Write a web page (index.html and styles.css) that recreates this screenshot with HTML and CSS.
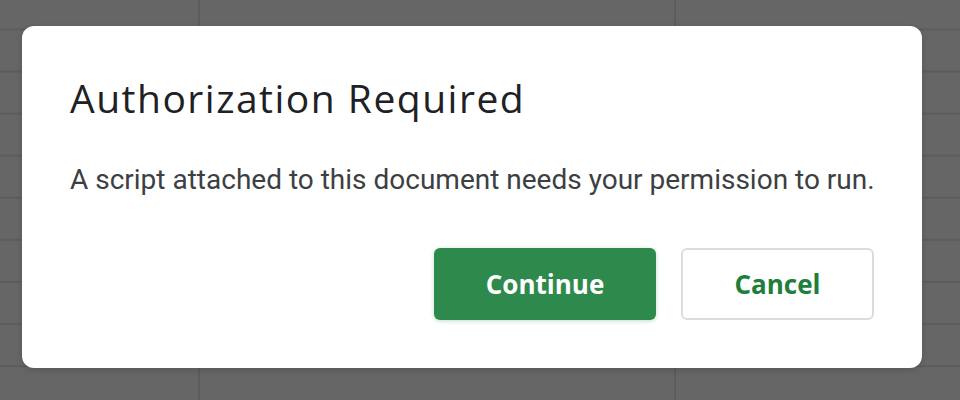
FILE: index.html
```html
<!DOCTYPE html>
<html lang="en">
<head>
  <meta charset="UTF-8" />
  <title>Authorization Required</title>
  <link rel="stylesheet" href="styles.css">
</head>
<body>

  <!-- Таблица на фоне -->
  <div class="sheet"></div>

  <!-- Диалог -->
  <div class="overlay">
    <div class="dialog">
      <h1 class="dialog-title">Authorization Required</h1>
      <p class="dialog-text">A script attached to this document needs your permission to run.</p>
      <div class="dialog-buttons">
        <button class="btn btn-primary">Continue</button>
        <button class="btn btn-secondary">Cancel</button>
      </div>
    </div>
  </div>

</body>
</html>
```

FILE: styles.css
```css
body {
  margin: 0;
  width: 960px;
  height: 400px;
  overflow: hidden;
  background: #666;
  font-family: Roboto, Arial, sans-serif;
}
.sheet {
  position: absolute;
  top: 0; left: 0;
  width: 960px; height: 400px;
  background-color: #666;
  background-image:
    linear-gradient(to bottom, transparent 27px, #5c5c5c 27px, #5c5c5c 29px, transparent 29px),
    linear-gradient(to right, transparent 198px, #5c5c5c 198px, #5c5c5c 200px, transparent 200px,
                              transparent 674px, #5c5c5c 674px, #5c5c5c 676px, transparent 676px);
  background-size: 960px 42.1px, 960px 400px;
  background-position: 0 1px, 0 0;
}
.overlay {
  position: absolute;
  top: 0; left: 0;
  width: 960px; height: 400px;
  padding: 26px 38px 32px 22px;
  box-sizing: border-box;
}
.dialog {
  background: #fff;
  border-radius: 12px;
  height: 342px;
  box-sizing: border-box;
  padding: 0 48px;
  box-shadow: 0 2px 6px rgba(0, 0, 0, 0.15);
}
.dialog-title {
  margin: 0;
  padding-top: 52px;
  font-family: "Open Sans", Arial, sans-serif;
  font-weight: 400;
  font-size: 39px;
  line-height: 39px;
  letter-spacing: 1.5px;
  color: #202124;
}
.dialog-text {
  margin: 49px 0 0;
  font-size: 28px;
  line-height: 28px;
  white-space: nowrap;
  color: #3c4043;
}
.dialog-buttons {
  display: flex;
  justify-content: flex-end;
  gap: 25px;
  margin-top: 54px;
}
.btn {
  height: 72px;
  border-radius: 6px;
  font-family: "Open Sans", Arial, sans-serif;
  font-weight: 700;
  font-size: 26px;
  cursor: pointer;
}
.btn-primary {
  width: 222px;
  background: #2e8a4c;
  color: #fff;
  border: none;
  box-shadow: 0 1px 4px rgba(46, 138, 76, 0.3);
}
.btn-secondary {
  width: 193px;
  background: #fff;
  color: #1e7e3a;
  border: 2px solid #dadce0;
}
```
